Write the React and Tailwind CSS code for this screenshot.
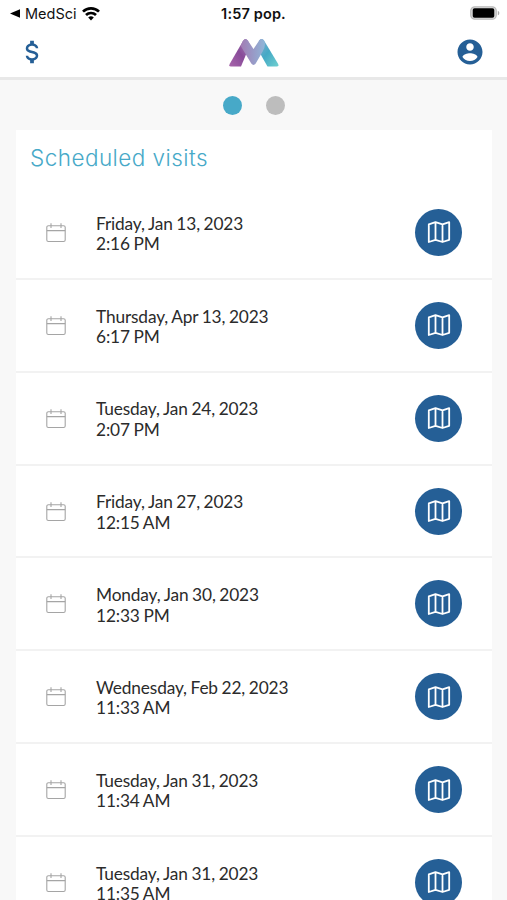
const visits = [
  ['Friday, Jan 13, 2023', '2:16 PM'],
  ['Thursday, Apr 13, 2023', '6:17 PM'],
  ['Tuesday, Jan 24, 2023', '2:07 PM'],
  ['Friday, Jan 27, 2023', '12:15 AM'],
  ['Monday, Jan 30, 2023', '12:33 PM'],
  ['Wednesday, Feb 22, 2023', '11:33 AM'],
  ['Tuesday, Jan 31, 2023', '11:34 AM'],
  ['Tuesday, Jan 31, 2023', '11:35 AM'],
];

function StatusBar() {
  return (
    <div className="grid h-[27px] grid-cols-3 items-center px-2 text-[14.5px] text-[#111]">
      <div className="flex items-center">
        <svg className="ml-[2px] h-[9px] w-[10px]" viewBox="0 0 10 9"><path d="M0 4.5 10 .3v8.4z" fill="#000" /></svg>
        <span className="ml-[5px]">MedSci</span>
        <svg className="ml-[5px] h-[14px] w-[18px]" viewBox="0 0 18 14" fill="none" stroke="#000" strokeWidth="2.7">
          <path d="M1 4.6a11.5 11.5 0 0 1 16 0M4 8a7.2 7.2 0 0 1 10 0" />
          <path d="M9 13.4 6.2 10.6a4 4 0 0 1 5.6 0z" fill="#000" stroke="none" />
        </svg>
      </div>
      <div className="text-center font-semibold tracking-[0.15px]">1:57 pop.</div>
      <div className="flex justify-end">
        <svg className="-mr-[1px] -mt-[1px] h-[14px] w-[30px]" viewBox="0 0 30 14">
          <rect x=".8" y=".8" width="25.4" height="12.4" rx="4" fill="#e2e2e2" stroke="#b9b9b9" strokeWidth="1.3" />
          <rect x="2.7" y="2.3" width="21.6" height="9.4" rx="1.8" />
          <path d="M27.8 4.7c2 .8 2 3.8 0 4.6z" fill="#aaa" />
        </svg>
      </div>
    </div>
  );
}

function Logo() {
  return (
    <svg className="h-[30px] w-[52px]" viewBox="0 0 52 30">
      <defs>
        <linearGradient id="left" x1="0" y1="1" x2="1" y2="0"><stop stopColor="#a865ab" /><stop offset=".5" stopColor="#884b99" /><stop offset="1" stopColor="#a98bbd" /></linearGradient>
        <linearGradient id="middle"><stop stopColor="#a27cb4" /><stop offset="1" stopColor="#8fb6d8" /></linearGradient>
        <linearGradient id="right" x1="0" y1="0" x2="1" y2="1"><stop stopColor="#8dacd2" /><stop offset=".5" stopColor="#45a9c5" /><stop offset="1" stopColor="#6fd0d0" /></linearGradient>
      </defs>
      <path d="M15.3 2.5Q17.5-.3 19.8 2.5L22 7 13 28.5H3Q.4 28.5 1.8 25.7z" fill="url(#left)" />
      <path d="M31.2 2.5Q33.8-.3 36 2.5L50 25.7Q51.3 28.5 48.6 28.5H39.5L29 10z" fill="url(#right)" />
      <path d="M14.6 3.3Q17.5-.7 20 2.8L25.5 11 31.2 2.5Q33.7-.6 36.1 2.8 38.5 7 34.4 14L27.7 25.6Q25.5 28.5 23.3 25.6L12.7 8z" fill="url(#middle)" />
    </svg>
  );
}

function Header() {
  return (
    <header className="flex h-[53px] items-center justify-between border-b-[3px] border-[#e8e8e8] pr-[22px] pl-[17px]">
      <svg className="h-[30px] w-[30px]" viewBox="0 0 24 24" fill="#255f96">
        <path d="M7 15h2c0 1.08 1.37 2 3 2s3-.92 3-2c0-1.1-1.04-1.5-3.24-2.03C9.64 12.44 7 11.78 7 9c0-1.79 1.47-3.31 3.5-3.82V3h3v2.18C15.53 5.69 17 7.21 17 9h-2c0-1.08-1.37-2-3-2s-3 .92-3 2c0 1.1 1.04 1.5 3.24 2.03C14.36 11.56 17 12.22 17 15c0 1.79-1.47 3.31-3.5 3.82V21h-3v-2.18C8.47 18.31 7 16.79 7 15z" />
      </svg>
      <div className="ml-[6px] pt-[1px]"><Logo /></div>
      <svg className="h-[30px] w-[30px]" viewBox="0 0 24 24" fill="#255f96">
        <path d="M12 2C6.48 2 2 6.48 2 12s4.48 10 10 10 10-4.48 10-10S17.52 2 12 2zm0 3c1.66 0 3 1.34 3 3s-1.34 3-3 3-3-1.34-3-3 1.34-3 3-3zm0 14.2c-2.5 0-4.71-1.28-6-3.22.03-1.99 4-3.08 6-3.08 1.99 0 5.97 1.09 6 3.08-1.29 1.94-3.5 3.22-6 3.22z" />
      </svg>
    </header>
  );
}

function Visit({ date, time }) {
  return (
    <li className="flex h-[92.86px] shrink-0 items-center border-b-2 border-[#f2f2f2] pr-[30px] pl-[30px]">
      <svg className="mt-[1px] h-[20px] w-[20px] shrink-0" viewBox="0 0 20 20" fill="none" stroke="#a5a5a5" strokeWidth="1.1">
        <rect x=".8" y="2.7" width="18.4" height="15.8" rx="1.6" />
        <path d="M.8 7.6h18.4M5 .3v4.6M15 .3v4.6" />
      </svg>
      <div className="ml-[30px] flex-1 pt-[3.5px] font-['Lato',sans-serif] text-[17.3px] leading-[20.5px] tracking-[-0.14px] text-[#2b2b2b] [word-spacing:-0.6px]">
        <p>{date}</p>
        <p>{time}</p>
      </div>
      <button className="flex h-[47px] w-[47px] items-center justify-center rounded-full bg-[#255f96]" aria-label="Open map">
        <svg className="h-[24px] w-[24px]" viewBox="0 0 24 24" fill="none" stroke="#fff" strokeWidth="1.8" strokeLinejoin="round">
          <path d="M1.8 4.4 8.5 2.2l7 2.2 6.7-2.2v17.6l-6.7 2.2-7-2.2-6.7 2.2zM8.5 2.2v17.6M15.5 4.4V22" />
        </svg>
      </button>
    </li>
  );
}

export default function App() {
  return (
    <div className="h-[900px] w-[507px] overflow-hidden bg-[#f8f8f8] font-['Inter',sans-serif]">
      <div className="bg-white"><StatusBar /><Header /></div>
      <div className="flex h-[50px] items-center justify-center gap-[24px]">
        <span className="h-[19px] w-[19px] rounded-full bg-[#47a9c8]" />
        <span className="h-[19px] w-[19px] rounded-full bg-[#bdbdbd]" />
      </div>
      <main className="mr-[15px] ml-[16px] bg-white">
        <h1 className="h-[57px] pt-[13px] pl-[14px] text-[22.5px] leading-[30px] font-light tracking-[0.45px] text-[#47a9c8]">Scheduled visits</h1>
        <ul>
          {visits.map(([date, time]) => <Visit key={date + time} date={date} time={time} />)}
        </ul>
      </main>
    </div>
  );
}
